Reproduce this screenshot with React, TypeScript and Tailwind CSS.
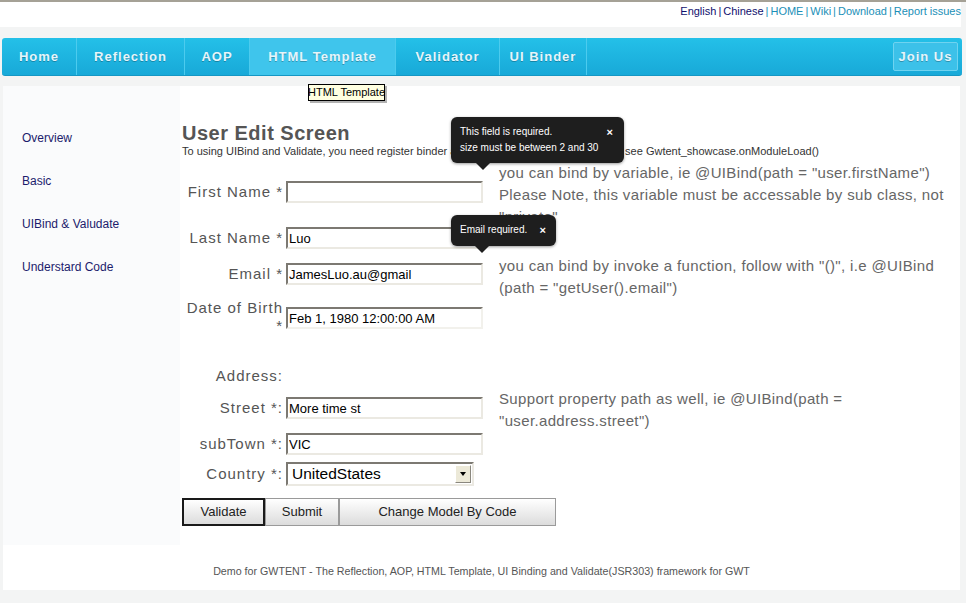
const navItems = [
  { label: "Home", w: "w-[75px]" },
  { label: "Reflection", w: "w-[108px]" },
  { label: "AOP", w: "w-[65px]" },
  { label: "HTML Template", w: "w-[146px]", active: true },
  { label: "Validator", w: "w-[104px]" },
  { label: "UI Binder", w: "w-[87px]" },
];

const sideLinks = ["Overview", "Basic", "UIBind & Valudate", "Understard Code"];

function TopLinks() {
  return (
    <div className="mr-[5px] flex h-[25px] justify-end bg-white pt-[2px] text-[11px] leading-[14px]">
      <span className="text-[#10106e]">English</span>
      <span className="mx-[2px] text-[#10106e]">|</span>
      <span className="text-[#10106e]">Chinese</span>
      {["HOME", "Wiki", "Download", "Report issues"].map((l) => (
        <span key={l} className="text-[#1b8fb7]">
          <span className="mx-[2px]">|</span>
          {l}
        </span>
      ))}
    </div>
  );
}

function NavBar() {
  return (
    <div className="relative ml-[2px] mr-[4px] flex h-[38px] items-stretch rounded-[3px] border-b border-[#1597c4] bg-gradient-to-b from-[#24c0e8] to-[#18a9d8]">
      {navItems.map((item) => (
        <div
          key={item.label}
          className={`${item.w} flex items-center justify-center border-r border-[#4ccbee] text-[13px] font-bold tracking-[1px] text-[#e6f5fa] [text-shadow:0_1px_0_rgba(0,0,0,0.25)] ${
            item.active ? "bg-[#3fc5ec]" : ""
          }`}
        >
          {item.label}
        </div>
      ))}
      <div className="ml-auto mr-[4px] flex h-[29px] w-[65px] items-center justify-center self-center rounded-[2px] border border-[#6fd3f0] bg-[#3cc1e9] text-[13px] font-bold tracking-[1px] text-[#e6f5fa] [text-shadow:0_1px_0_rgba(0,0,0,0.25)]">
        Join Us
      </div>
      {/* browser title tooltip */}
      <div className="absolute left-[306px] top-[46px] z-20 flex h-[17px] w-[77px] items-center justify-center whitespace-nowrap border border-black bg-[#ffffe1] text-[11px] text-black shadow-[2px_2px_0_rgba(0,0,0,0.3)]">
        HTML Template
      </div>
    </div>
  );
}

const fieldCls =
  "h-[22px] w-[197px] border-2 border-t-[#7c7972] border-l-[#7c7972] border-r-[#ebe9e2] border-b-[#ebe9e2] bg-white pl-[1px] text-[13px] text-black outline-none font-['Liberation_Sans',Arial,sans-serif]";

function Label({ children, className = "" }: { children: React.ReactNode; className?: string }) {
  return (
    <div className={`w-[104px] shrink-0 pr-[3px] text-right text-[15px] tracking-[1px] text-[#555] ${className}`}>
      {children}
    </div>
  );
}

function Comment({ children }: { children: React.ReactNode }) {
  return (
    <div className="ml-[16px] w-[450px] text-[15px] leading-[22px] tracking-[0.35px] text-[#666]">{children}</div>
  );
}

function Tip({
  children,
  className,
  arrowLeft,
}: {
  children: React.ReactNode;
  className: string;
  arrowLeft: string;
}) {
  return (
    <div
      className={`absolute z-10 rounded-[6px] bg-[#1e1e1e] text-[10px] leading-[16px] text-white shadow-[0_1px_3px_rgba(0,0,0,0.4)] ${className}`}
    >
      {children}
      <div
        className={`absolute top-full ${arrowLeft} h-0 w-0 border-l-[7px] border-r-[7px] border-t-[7px] border-l-transparent border-r-transparent border-t-[#1e1e1e]`}
      />
    </div>
  );
}

function EditForm() {
  return (
    <div className="relative flex-1 pl-[2px] pt-[35px]">
      <h1 className="text-[20px] font-bold leading-[24px] tracking-[0.5px] text-[#555]">User Edit Screen</h1>
      <p className="whitespace-nowrap text-[11px] leading-[13px] text-[#333]">
        To using UIBind and Validate, you need register binder and validate messages first, please see
        Gwtent_showcase.onModuleLoad()
      </p>

      {/* First Name */}
      <div className="mt-[4px] flex h-[65px] items-start">
        <Label className="mt-[19px] leading-[22px]">First Name *</Label>
        <input className={`mt-[19px] ${fieldCls}`} defaultValue="" />
        <Comment>
          you can bind by variable, ie @UIBind(path = "user.firstName") Please Note, this variable must be
          accessable by sub class, not "private"
        </Comment>
      </div>

      {/* Last Name */}
      <div className="flex h-[22px] items-start">
        <Label className="leading-[22px]">Last Name *</Label>
        <input className={fieldCls} defaultValue="Luo" />
      </div>

      {/* Email */}
      <div className="mt-[6px] flex items-start">
        <Label className="mt-[8px] leading-[22px]">Email *</Label>
        <input className={`mt-[8px] ${fieldCls}`} defaultValue="JamesLuo.au@gmail" />
        <Comment>
          you can bind by invoke a function, follow with "()", i.e @UIBind (path = "getUser().email")
        </Comment>
      </div>

      {/* Date of Birth */}
      <div className="flex h-[36px] items-start">
        <Label className="leading-[18px]">
          Date of Birth
          <br />*
        </Label>
        <input
          className={`mt-[8px] ${fieldCls} h-[20px] w-[192px] border-r-[#f2f1ec] border-b-[#f2f1ec] text-[12px]`}
          defaultValue="Feb 1, 1980 12:00:00 AM"
        />
      </div>

      <div className="mt-[30px] flex h-[22px]">
        <Label className="leading-[22px]">Address:</Label>
      </div>

      {/* Street */}
      <div className="mt-[1px] flex items-start">
        <Label className="mt-[9px] leading-[22px]">Street *:</Label>
        <input className={`mt-[9px] ${fieldCls}`} defaultValue="More time st" />
        <Comment>Support property path as well, ie @UIBind(path = "user.address.street")</Comment>
      </div>

      {/* subTown */}
      <div className="mt-[1px] flex h-[22px] items-start">
        <Label className="leading-[22px]">subTown *:</Label>
        <input className={fieldCls} defaultValue="VIC" />
      </div>

      {/* Country */}
      <div className="mt-[7px] flex h-[24px] items-start">
        <Label className="leading-[24px]">Country *:</Label>
        <div className="flex h-[24px] w-[188px] items-center border-2 border-t-[#7c7972] border-l-[#7c7972] border-r-[#ebe9e2] border-b-[#ebe9e2] bg-white">
          <span className="flex-1 pl-[4px] text-[15.5px] text-black">UnitedStates</span>
          <div className="mr-[1px] flex h-[18px] w-[16px] items-center justify-center border border-t-white border-l-white border-r-[#8a877e] border-b-[#8a877e] bg-[#ece9d8]">
            <div className="h-0 w-0 border-l-[3px] border-r-[3px] border-t-[4px] border-l-transparent border-r-transparent border-t-black" />
          </div>
        </div>
      </div>

      {/* Buttons */}
      <div className="mt-[12px] flex h-[28px] text-[13px] text-[#222]">
        <button className="w-[83px] border-2 border-[#1a1a1a] bg-gradient-to-b from-white to-[#dcdcdc]">
          Validate
        </button>
        <button className="w-[74px] border border-[#9a9a9a] bg-gradient-to-b from-white to-[#dcdcdc]">
          Submit
        </button>
        <button className="w-[217px] border border-[#9a9a9a] bg-gradient-to-b from-white to-[#dcdcdc]">
          Change Model By Code
        </button>
      </div>

      <Tip className="left-[271px] top-[31px] h-[46px] w-[173px] pl-[9px] pt-[7px]" arrowLeft="left-[25px]">
        <div className="flex">
          <span className="flex-1">This field is required.</span>
          <span className="mr-[11px] text-[11px] font-bold">×</span>
        </div>
        <div>size must be between 2 and 30</div>
      </Tip>

      <Tip className="left-[271px] top-[129px] h-[31px] w-[105px] pl-[9px] pt-[7px]" arrowLeft="left-[24px]">
        <div className="flex">
          <span className="flex-1">Email required.</span>
          <span className="mr-[10px] text-[11px] font-bold">×</span>
        </div>
      </Tip>
    </div>
  );
}

export default function App() {
  return (
    <div className="min-h-[603px] w-[966px] bg-[#f3f4f4] font-['Liberation_Sans',Arial,sans-serif]">
      <div className="h-[2px] bg-[#a5a196]" />
      <TopLinks />
      <div className="h-[11px]" />
      <NavBar />
      <div className="h-[10px]" />
      <div className="ml-[3px] mr-[6px] bg-white">
        <div className="flex">
          <div className="h-[459px] w-[177px] shrink-0 bg-[#fafbfc] pl-[19px] pt-[44px]">
            <div className="flex flex-col gap-[27px]">
              {sideLinks.map((l) => (
                <span key={l} className="text-[12px] leading-[16px] text-[#1c1c6c]">
                  {l}
                </span>
              ))}
            </div>
          </div>
          <EditForm />
        </div>
        <div className="h-[45px] pt-[20px] text-center text-[10.7px] leading-[13px] text-[#555]">
          Demo for GWTENT - The Reflection, AOP, HTML Template, UI Binding and Validate(JSR303) framework for GWT
        </div>
      </div>
    </div>
  );
}
